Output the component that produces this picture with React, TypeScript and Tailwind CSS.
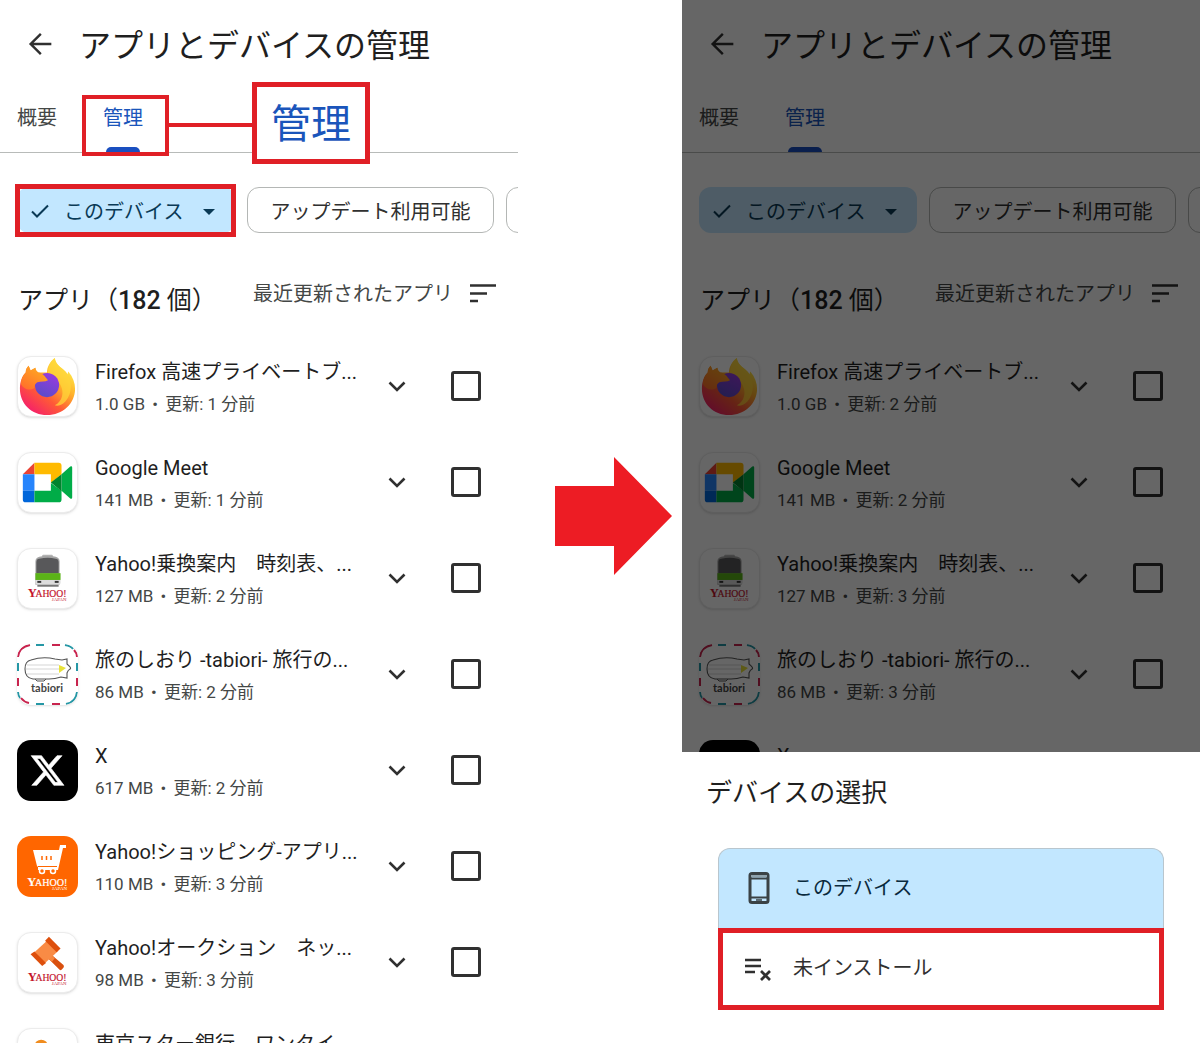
import { useState, type ReactNode } from 'react'

type AppEntry = {
  name: string
  size: string
  icon: ReactNode
  frame: string
}

const PLAIN_FRAME = 'border border-[#ececec] bg-white shadow-sm'

function YahooMark({ fill }: { fill: string }) {
  return (
    <g fill={fill} fontFamily="Liberation Serif, serif">
      <text x="10" y="50" fontSize="13" fontWeight="bold">
        Y
      </text>
      <text x="18" y="50" fontSize="10" stroke={fill} strokeWidth="0.200">
        AHOO!
      </text>
      <text x="35" y="54" fontSize="5">
        JAPAN
      </text>
    </g>
  )
}

function FirefoxIcon() {
  return (
    <svg viewBox="0 0 61 61" className="size-full" aria-hidden="true">
      <defs>
        <linearGradient id="fxBody" x1="0.85" y1="0.1" x2="0.2" y2="0.95">
          <stop offset="0" stopColor="#fff04a" />
          <stop offset="0.35" stopColor="#ffb02a" />
          <stop offset="0.65" stopColor="#ff5a36" />
          <stop offset="1" stopColor="#f5206a" />
        </linearGradient>
        <linearGradient id="fxHead" x1="0" y1="1" x2="0.7" y2="0">
          <stop offset="0" stopColor="#ff6a2c" />
          <stop offset="1" stopColor="#ffab22" />
        </linearGradient>
        <linearGradient id="fxGlobe" x1="0.8" y1="0" x2="0.3" y2="1">
          <stop offset="0" stopColor="#9a3ae0" />
          <stop offset="1" stopColor="#5a4cc8" />
        </linearGradient>
      </defs>
      <path
        d="M38 1c1 7 6 9 11 14 1 1 2 2 2 3l1-3c5 6 7 12 7 18 0 15-13 27-29 27C14 60 2 48 2 33c0-7 2-13 6-17 0-3 1-5 3-7l2 5 5-3c0 2 1 3 3 5h9c0-6 3-11 8-15z"
        fill="url(#fxBody)"
      />
      <path
        d="M38 1c1 7 6 9 11 14 7 8 8 22 0 31-4 4-8 5-11 4 8-4 10-13 6-21-3-6-9-7-13-12 0-7 2-12 7-16z"
        fill="#ffd53a"
        opacity="0.75"
      />
      <circle cx="30" cy="29" r="12.500" fill="url(#fxGlobe)" />
      <path
        d="M3 28c0-5 2-9 5-12 0-3 1-5 3-7l2 5 5-3c0 2 1 4 3 5 4 0 7 4 10 8-3 2-7 1-11 2-2 1-3 3-3 6-5 3-11 2-14-4z"
        fill="url(#fxHead)"
      />
    </svg>
  )
}

function MeetIcon() {
  return (
    <svg viewBox="0 0 61 61" className="size-full" aria-hidden="true">
      <path d="M17 10v12H5z" fill="#ea4335" />
      <path d="M17 10h25q3 0 3 3v9l-11 9v-9H17z" fill="#ffba00" />
      <path d="M5 22h12v17H5z" fill="#2684fc" />
      <path d="M5 39h12v12H8q-3 0-3-3z" fill="#0066da" />
      <path d="M17 39h17v-8l11 8v9q0 3-3 3H17z" fill="#00ac47" />
      <path d="M45 22l9-8q2-1 2 1v31q0 2-2 1l-9-8z" fill="#00ac47" />
      <path d="M34 30.500l11-8.500v17.500z" fill="#00832d" />
    </svg>
  )
}

function TrainIcon() {
  return (
    <svg viewBox="0 0 61 61" className="size-full" aria-hidden="true">
      <rect x="25" y="6" width="11" height="4" rx="1" fill="#b5b5b5" />
      <path d="M18 13q0-4 4-5 9-2 17 0 4 1 4 5v24H18z" fill="#a5a5a5" />
      <path d="M19 14q0-4 3-4 9-2 17 0 3 0 3 4v11H19z" fill="#58585a" />
      <rect x="18" y="25" width="26" height="7" fill="#5bb318" />
      <path d="M18 32h26v3q0 2-2 2H20q-2 0-2-2z" fill="#dcdcdc" />
      <rect x="20" y="33" width="4" height="2" fill="#333" />
      <rect x="38" y="33" width="4" height="2" fill="#333" />
      <rect x="20" y="37" width="22" height="2" fill="#777" />
      <YahooMark fill="#c4142c" />
    </svg>
  )
}

function TabioriIcon() {
  return (
    <svg viewBox="0 0 61 61" className="size-full" fill="none" aria-hidden="true">
      <g stroke="#c8244e" strokeWidth="2">
        <path d="M1 13Q2 3 13 1M35 1h8M60 34v8M1 34v8M35 60h8M4 54q3 4 8 5M57 6q3 3 3 7" />
      </g>
      <g stroke="#2597a5" strokeWidth="2">
        <path d="M19 1h8M48 1q6 1 8 4M60 19v8M1 19v8M19 60h8M1 48q0 4 2 6M60 48Q59 58 49 60" />
      </g>
      <path
        d="M14 16q12-4 24-1l7 1 5-1v5q5 4 3 5t-3 4v5l-6-1q-6 2-12 2H16q-8-1-8-10 0-8 6-9z"
        stroke="#555"
        strokeWidth="1.100"
      />
      <path d="M10 21h32M9 25h33M10 30h32" stroke="#bbb" strokeWidth="0.600" />
      <path d="M42 21l7 3-7 5z" fill="#e8e23a" />
      <path d="M18 35l2 2h7l2-2" stroke="#555" strokeWidth="1" />
      <text
        x="30"
        y="48"
        textAnchor="middle"
        fontSize="11"
        fontFamily="Lato, sans-serif"
        fontWeight="bold"
        fill="#444"
      >
        tabiori
      </text>
    </svg>
  )
}

function XIcon() {
  return (
    <svg viewBox="-8 -8 40 40" className="size-full" fill="#fff" aria-hidden="true">
      <path
        d="M18.244 2.250h3.308l-7.227 8.260 8.502 11.240H16.170l-5.214-6.817L4.990 21.750H1.680l7.730-8.835L1.254 2.250H8.080l4.713 6.231zm-1.161 17.520h1.833L7.084 4.126H5.117z"
        stroke="#fff"
        strokeWidth="0.400"
      />
    </svg>
  )
}

function CartIcon() {
  return (
    <svg viewBox="0 0 61 61" className="size-full" aria-hidden="true">
      <path d="M16 14h26l1-5h6v3h-3l-5 22H21v-3L20 30z" fill="#fff" />
      <circle cx="25" cy="35" r="2.500" fill="#ff6600" stroke="#fff" strokeWidth="1.500" />
      <circle cx="36" cy="35" r="2.500" fill="#ff6600" stroke="#fff" strokeWidth="1.500" />
      <path d="M21 30.500h19" stroke="#ff6600" />
      <path d="M25 20v4M29.500 20v4M34 20v4" stroke="#ff6600" strokeWidth="1.500" />
      <YahooMark fill="#fff" />
    </svg>
  )
}

function HammerIcon() {
  return (
    <svg viewBox="0 0 61 61" className="size-full" aria-hidden="true">
      <path d="M31 26l3-4 13 11q1 1 0 3l-2 2q-1 1-2 0z" fill="#d9500f" />
      <path d="M31 26l3-4 4 4-3 4z" fill="#f7873e" />
      <path d="M17 20L30 8l11 11-13 12z" fill="#f98b45" />
      <path d="M28 8l4-4 12 12-4 4z" fill="#dd4f0c" />
      <path d="M13 22l4-3 12 12-4 3z" fill="#dd4f0c" />
      <YahooMark fill="#c4142c" />
    </svg>
  )
}

function BankIcon() {
  return (
    <svg viewBox="0 0 61 61" className="size-full" aria-hidden="true">
      <circle cx="24" cy="18" r="7" fill="#f08c1e" />
      <path d="M12 46q2-16 12-16t12 16z" fill="#f08c1e" />
    </svg>
  )
}

const APPS: AppEntry[] = [
  { name: 'Firefox 高速プライベートブ...', size: '1.0 GB', icon: <FirefoxIcon />, frame: PLAIN_FRAME },
  { name: 'Google Meet', size: '141 MB', icon: <MeetIcon />, frame: PLAIN_FRAME },
  { name: 'Yahoo!乗換案内　時刻表、...', size: '127 MB', icon: <TrainIcon />, frame: PLAIN_FRAME },
  { name: '旅のしおり -tabiori- 旅行の...', size: '86 MB', icon: <TabioriIcon />, frame: 'bg-white shadow-sm' },
  { name: 'X', size: '617 MB', icon: <XIcon />, frame: 'bg-black' },
  { name: 'Yahoo!ショッピング-アプリ...', size: '110 MB', icon: <CartIcon />, frame: 'bg-[#ff6600]' },
  { name: 'Yahoo!オークション　ネッ...', size: '98 MB', icon: <HammerIcon />, frame: PLAIN_FRAME },
  { name: '東京スター銀行　ワンタイ', size: '', icon: <BankIcon />, frame: PLAIN_FRAME },
]

function AppRow({ app, minutes }: { app: AppEntry; minutes: number | null }) {
  const [checked, setChecked] = useState(false)

  return (
    <li className="flex h-24 shrink-0 items-center pr-[37px] pl-[17px]">
      <div className={`size-[61px] shrink-0 overflow-hidden rounded-[14px] ${app.frame}`}>
        {app.icon}
      </div>
      <div className="ml-[17px] h-16 min-w-0 flex-1 pt-0.5 whitespace-nowrap">
        <p className="text-[20px] leading-8 text-[#1f1f1f]">{app.name}</p>
        {minutes !== null ? (
          <p className="text-[17px] leading-8 text-[#444746]">
            {app.size}
            <span className="mx-[3px]"> • </span>
            更新: {minutes} 分前
          </p>
        ) : null}
      </div>
      <button type="button" aria-label={`${app.name} 詳細`} className="mr-[39px] shrink-0">
        <svg viewBox="0 0 30 30" className="size-[30px]" fill="none" aria-hidden="true">
          <path d="M7.500 11.500l7.500 7.500 7.500-7.500" stroke="#303030" strokeWidth="2.600" />
        </svg>
      </button>
      <input
        type="checkbox"
        aria-label={app.name}
        checked={checked}
        onChange={(event) => setChecked(event.target.checked)}
        className="size-[30px] shrink-0 appearance-none rounded-[3px] border-3 border-[#303030] checked:bg-[#0b57d0]"
      />
    </li>
  )
}

// one entry in `minutes` per visible row
function ManageScreen({ minutes }: { minutes: Array<number | null> }) {
  return (
    <>
      <header className="flex h-[88px] items-center gap-[22px] pl-[23px]">
        <button type="button" aria-label="戻る">
          <svg viewBox="0 0 24 24" className="size-[34px]" fill="#303030" aria-hidden="true">
            <path d="M20 11.100H7.500l5.700-5.700L12 4.200 4.200 12l7.800 7.800 1.200-1.200-5.700-5.700H20z" />
          </svg>
        </button>
        <h1 className="pt-1 text-[32px] leading-10 whitespace-nowrap text-[#1f1f1f]">
          アプリとデバイスの管理
        </h1>
      </header>

      <nav className="flex h-[65px] border-b border-[#b8bbb9] pl-[17px] text-[20px] leading-[60px]">
        <a href="#overview" className="text-[#444746]">
          概要
        </a>
        <a href="#manage" className="relative ml-[46px] text-[#1a55bb]">
          管理
          <span className="absolute inset-x-[3px] bottom-0 h-[5px] rounded-t-full bg-[#1a4fc0]" />
        </a>
      </nav>

      <div className="mt-[34px] flex h-[46px] gap-3 overflow-hidden pl-[17px] text-[20px] whitespace-nowrap">
        <button
          type="button"
          className="flex w-[218px] shrink-0 items-center rounded-xl bg-[#c2e7ff] pt-1 pl-[13px] text-[#0a3a56]"
        >
          <svg viewBox="0 0 20 20" className="size-5" fill="none" aria-hidden="true">
            <path d="M2 9.500l5 5L18 3.500" stroke="currentColor" strokeWidth="2" />
          </svg>
          <span className="ml-[14px]">このデバイス</span>
          <svg viewBox="0 0 12 6" className="ml-5 h-[6px] w-3" fill="currentColor" aria-hidden="true">
            <path d="M0 0h12L6 6z" />
          </svg>
        </button>
        <button
          type="button"
          className="w-[247px] shrink-0 rounded-xl border border-[#b4b7b5] pt-1 text-[#303030]"
        >
          アップデート利用可能
        </button>
        <button
          type="button"
          aria-label="次の条件"
          className="w-[120px] shrink-0 rounded-xl border border-[#b4b7b5]"
        />
      </div>

      <div className="flex h-[105px] items-center justify-between pr-[21px] pl-[18px] whitespace-nowrap">
        <h2 className="pt-[30px] text-[25px] text-[#1f1f1f]">
          アプリ（<span className="font-medium">182</span> 個）
        </h2>
        <button type="button" className="flex items-center gap-4 pt-4 text-[20px] text-[#444746]">
          最近更新されたアプリ
          <svg viewBox="0 0 28 20" className="h-5 w-7" fill="none" aria-hidden="true">
            <path d="M1 1.500h26M1 9.500h17M1 17h8" stroke="#303030" strokeWidth="2.600" />
          </svg>
        </button>
      </div>

      <ul className="flex flex-col">
        {minutes.map((value, index) => (
          <AppRow key={APPS[index].name} app={APPS[index]} minutes={value} />
        ))}
      </ul>
    </>
  )
}

function DeviceSheet() {
  return (
    <section className="shrink-0 bg-white pt-5 pr-9 pb-[33px] pl-9">
      <h2 className="-ml-3 text-[26px] leading-[42px] text-[#1f1f1f]">デバイスの選択</h2>
      <div className="mt-[34px] text-[20px]">
        <button
          type="button"
          className="flex h-20 w-full items-center gap-[18px] rounded-t-xl border border-b-0 border-[#b9c6ce] bg-[#c2e7ff] pb-0.5 pl-6 text-[#0a2a3d]"
        >
          <svg viewBox="0 0 32 32" className="size-8" fill="none" aria-hidden="true">
            <rect x="7" y="1.500" width="18" height="29" rx="2" stroke="#3a4245" strokeWidth="3" />
            <path d="M7 6.500h18M7 25.500h18" stroke="#3a4245" strokeWidth="2" />
            <path d="M8 4h16" stroke="#8fa3ad" strokeWidth="2" />
            <path d="M13 28h6" stroke="#3a4245" strokeWidth="1.500" />
          </svg>
          このデバイス
        </button>
        <button
          type="button"
          className="flex h-[82px] w-full items-center gap-[18px] border-5 border-[#e01f26] bg-white pb-0.5 pl-5 text-[#303030]"
        >
          <svg viewBox="0 0 32 32" className="size-8" fill="none" aria-hidden="true">
            <path d="M2 8h16M2 14h16M2 20h10" stroke="#303030" strokeWidth="2.700" />
            <path d="M18 19l9 9M27 19l-9 9" stroke="#303030" strokeWidth="2.700" />
          </svg>
          未インストール
        </button>
      </div>
    </section>
  )
}

export default function App() {
  return (
    <div className="flex h-screen overflow-hidden bg-white font-[Roboto,'Noto_Sans_CJK_JP',sans-serif]">
      <div className="relative min-w-0 flex-1 overflow-hidden">
        <ManageScreen minutes={[1, 1, 2, 2, 2, 3, 3, null]} />
        {/* callouts over the tab and the device filter */}
        <div className="absolute top-[95px] left-[82px] h-[61px] w-[87px] border-4 border-[#e01f26]" />
        <div className="absolute top-[123px] left-[168px] h-1 w-[86px] bg-[#e01f26]" />
        <div className="absolute top-[82px] left-[252px] flex h-[82px] w-[118px] items-center justify-center border-5 border-[#e01f26] bg-white pt-1 text-[40px] text-[#1a55bb]">
          管理
        </div>
        <div className="absolute top-[184px] left-[15px] h-[53px] w-[221px] border-5 border-[#e01f26]" />
      </div>

      <div className="flex w-[164px] shrink-0 items-center pb-3 pl-[37px]">
        <svg viewBox="0 0 117 118" className="w-[117px]" fill="#ed1c24" aria-hidden="true">
          <path d="M0 29h59V0l58 59-58 59V89H0z" />
        </svg>
      </div>

      <div className="flex min-w-0 flex-1 flex-col">
        <div className="relative min-h-0 flex-1 overflow-hidden">
          <ManageScreen minutes={[2, 2, 3, 3, null]} />
          <div className="absolute inset-0 bg-black/60" />
        </div>
        <DeviceSheet />
      </div>
    </div>
  )
}
